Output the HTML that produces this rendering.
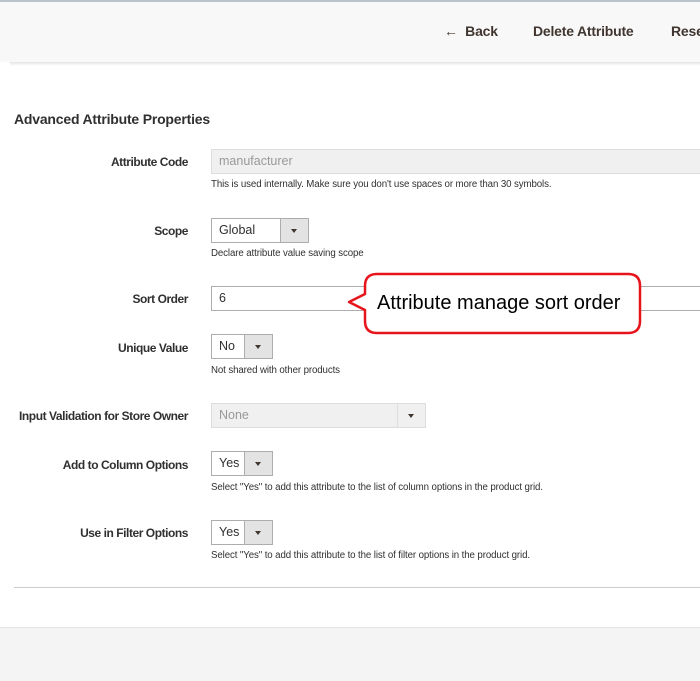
<!DOCTYPE html>
<html><head><meta charset="utf-8"><style>
body{margin:0;width:700px;height:680px;position:relative;overflow:hidden;background:#fff;font-family:"Liberation Sans",sans-serif;color:#303030}
.a{position:absolute}
.hdr{left:0;top:0;width:700px;height:62px;background:#f8f8f8;border-top:2px solid #b9c3cc;box-sizing:border-box}
.btn{top:23px;font-size:14px;font-weight:bold;color:#41362f;letter-spacing:-0.2px}
.lbl{font-size:12px;font-weight:bold;text-align:right;width:188px;left:0;color:#303030;letter-spacing:-0.45px}
.inp{left:211px;height:25px;border:1px solid #adadad;box-sizing:border-box;font-size:12.5px;line-height:23px;padding-left:7px;background:#fff}
.dis{background:#f0f0f0;border-color:#ddd;color:#999}
.sel .b{position:absolute;right:0;top:0;bottom:0;width:27px;background:#e3e3e3;border-left:1px solid #adadad}
.sel .b:after{content:"";position:absolute;left:10px;top:10px;border:3.5px solid transparent;border-top:4px solid #41362f}
.note{left:211px;font-size:9.7px;color:#303030;letter-spacing:-0.1px}
</style></head><body>
<div class="a hdr"></div>
<div class="a" style="left:10px;top:62px;width:690px;height:4px;background:linear-gradient(#e4e4e4,#fff)"></div>
<div class="a btn" style="left:444px">←&nbsp; Back</div>
<div class="a btn" style="left:533px">Delete Attribute</div>
<div class="a btn" style="left:671px">Reset</div>
<div class="a" style="left:14px;top:111px;font-size:14px;font-weight:bold;letter-spacing:-0.2px">Advanced Attribute Properties</div>

<div class="a lbl" style="top:155px">Attribute Code</div>
<div class="a inp dis" style="top:149px;width:500px">manufacturer</div>
<div class="a note" style="top:179px">This is used internally. Make sure you don't use spaces or more than 30 symbols.</div>

<div class="a lbl" style="top:224px">Scope</div>
<div class="a inp sel" style="top:218px;width:98px">Global<span class="b"></span></div>
<div class="a note" style="top:248px">Declare attribute value saving scope</div>

<div class="a lbl" style="top:292px">Sort Order</div>
<div class="a inp" style="top:286px;width:500px">6</div>

<div class="a lbl" style="top:341px">Unique Value</div>
<div class="a inp sel" style="top:334px;width:62px">No<span class="b"></span></div>
<div class="a note" style="top:365px">Not shared with other products</div>

<div class="a lbl" style="top:409px">Input Validation for Store Owner</div>
<div class="a inp sel dis" style="top:403px;width:215px">None<span class="b" style="background:#f0f0f0;border-color:#ddd"></span></div>

<div class="a lbl" style="top:458px">Add to Column Options</div>
<div class="a inp sel" style="top:451px;width:62px">Yes<span class="b"></span></div>
<div class="a note" style="top:482px">Select "Yes" to add this attribute to the list of column options in the product grid.</div>

<div class="a lbl" style="top:526px">Use in Filter Options</div>
<div class="a inp sel" style="top:520px;width:62px">Yes<span class="b"></span></div>
<div class="a note" style="top:550px">Select "Yes" to add this attribute to the list of filter options in the product grid.</div>

<div class="a" style="left:14px;top:587px;width:686px;height:1px;background:#ccc"></div>
<div class="a" style="left:0;top:627px;width:700px;height:53px;background:#f4f4f4;border-top:1px solid #e3e3e3"></div>

<svg class="a" style="left:340px;top:268px" width="310" height="72">
<path d="M37 6 L288 6 Q300 6 300 18 L300 53 Q300 65 288 65 L37 65 Q25 65 25 53 L25 42 L9 34 L25 26 L25 18 Q25 6 37 6 Z" fill="#fff" stroke="#e8141c" stroke-width="2.5" stroke-linejoin="round"/>
<text x="37" y="41" font-family="Liberation Sans,sans-serif" font-size="20" fill="#000">Attribute manage sort order</text>
</svg>
</body></html>
